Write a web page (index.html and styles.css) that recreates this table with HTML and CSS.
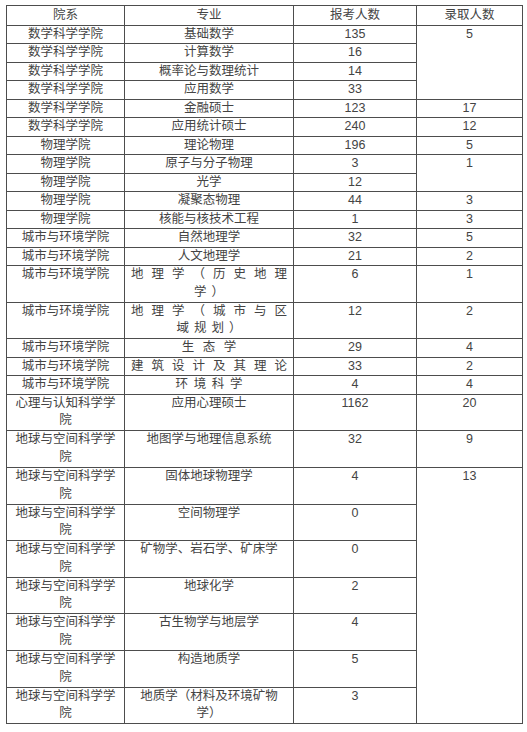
FILE: index.html
```html
<!DOCTYPE html>
<html lang="zh">
<head>
<meta charset="utf-8">
<title>录取人数</title>
<link rel="stylesheet" href="styles.css">
</head>
<body>
<table class="adm">
  <colgroup>
    <col class="c1"><col class="c2"><col class="c3"><col class="c4">
  </colgroup>
  <thead>
    <tr class="hd"><th>院系</th><th>专业</th><th>报考人数</th><th>录取人数</th></tr>
  </thead>
  <tbody>
    <tr class="s"><td>数学科学学院</td><td>基础数学</td><td>135</td><td rowspan="4">5</td></tr>
    <tr class="s"><td>数学科学学院</td><td>计算数学</td><td>16</td></tr>
    <tr class="s"><td>数学科学学院</td><td>概率论与数理统计</td><td>14</td></tr>
    <tr class="s"><td>数学科学学院</td><td>应用数学</td><td>33</td></tr>
    <tr class="s"><td>数学科学学院</td><td>金融硕士</td><td>123</td><td>17</td></tr>
    <tr class="s"><td>数学科学学院</td><td>应用统计硕士</td><td>240</td><td>12</td></tr>
    <tr class="s"><td>物理学院</td><td>理论物理</td><td>196</td><td>5</td></tr>
    <tr class="s"><td>物理学院</td><td>原子与分子物理</td><td>3</td><td rowspan="2">1</td></tr>
    <tr class="s"><td>物理学院</td><td>光学</td><td>12</td></tr>
    <tr class="s"><td>物理学院</td><td>凝聚态物理</td><td>44</td><td>3</td></tr>
    <tr class="s"><td>物理学院</td><td>核能与核技术工程</td><td>1</td><td>3</td></tr>
    <tr class="s"><td>城市与环境学院</td><td>自然地理学</td><td>32</td><td>5</td></tr>
    <tr class="s"><td>城市与环境学院</td><td>人文地理学</td><td>21</td><td>2</td></tr>
    <tr class="d"><td>城市与环境学院</td><td><span class="spread">地理学（历史地理</span><span class="rest">学）</span></td><td>6</td><td>1</td></tr>
    <tr class="d"><td>城市与环境学院</td><td><span class="spread">地理学（城市与区</span><span class="rest">域规划）</span></td><td>12</td><td>2</td></tr>
    <tr class="s"><td>城市与环境学院</td><td class="wide3">生态学</td><td>29</td><td>4</td></tr>
    <tr class="s"><td>城市与环境学院</td><td><span class="spread">建筑设计及其理论</span></td><td>33</td><td>2</td></tr>
    <tr class="s"><td>城市与环境学院</td><td class="wide4">环境科学</td><td>4</td><td>4</td></tr>
    <tr class="d"><td>心理与认知科学学院</td><td>应用心理硕士</td><td>1162</td><td>20</td></tr>
    <tr class="d"><td>地球与空间科学学院</td><td>地图学与地理信息系统</td><td>32</td><td>9</td></tr>
    <tr class="d"><td>地球与空间科学学院</td><td>固体地球物理学</td><td>4</td><td rowspan="8">13</td></tr>
    <tr class="d"><td>地球与空间科学学院</td><td>空间物理学</td><td>0</td></tr>
    <tr class="d"><td>地球与空间科学学院</td><td>矿物学、岩石学、矿床学</td><td>0</td></tr>
    <tr class="d"><td>地球与空间科学学院</td><td>地球化学</td><td>2</td></tr>
    <tr class="d"><td>地球与空间科学学院</td><td>古生物学与地层学</td><td>4</td></tr>
    <tr class="d"><td>地球与空间科学学院</td><td>构造地质学</td><td>5</td></tr>
    <tr class="d"><td>地球与空间科学学院</td><td>地质学（材料及环境矿物学）</td><td>3</td></tr>
  </tbody>
</table>
</body>
</html>
```
FILE: styles.css
```css
html, body {
  margin: 0;
  padding: 0;
  background: #ffffff;
}

body {
  font-family: "Liberation Sans", "Noto Sans CJK SC", sans-serif;
  color: #444444;
}

.adm {
  border-collapse: collapse;
  table-layout: fixed;
  width: 516px;
  margin: 5px 0 0 6px;
  font-size: 12.5px;
}

.c1 { width: 118px; }
.c2 { width: 169px; }
.c3 { width: 123px; }
.c4 { width: 106px; }

.adm th,
.adm td {
  border: 1px solid #4d4d4d;
  padding: 0 6px;
  line-height: 17.5px;
  text-align: center;
  vertical-align: top;
  font-weight: normal;
}

.hd { height: 19.7px; }
.hd th { vertical-align: middle; }
.s { height: 18.5px; }
.d { height: 36.6px; }

.spread {
  display: block;
  text-align: justify;
  text-align-last: justify;
}

.rest {
  display: block;
  text-align: center;
  letter-spacing: 5px;
  text-indent: 5px;
}

.wide3 { letter-spacing: 8.5px; text-indent: 8.5px; }
.wide4 { letter-spacing: 5.7px; text-indent: 5.7px; }
```
